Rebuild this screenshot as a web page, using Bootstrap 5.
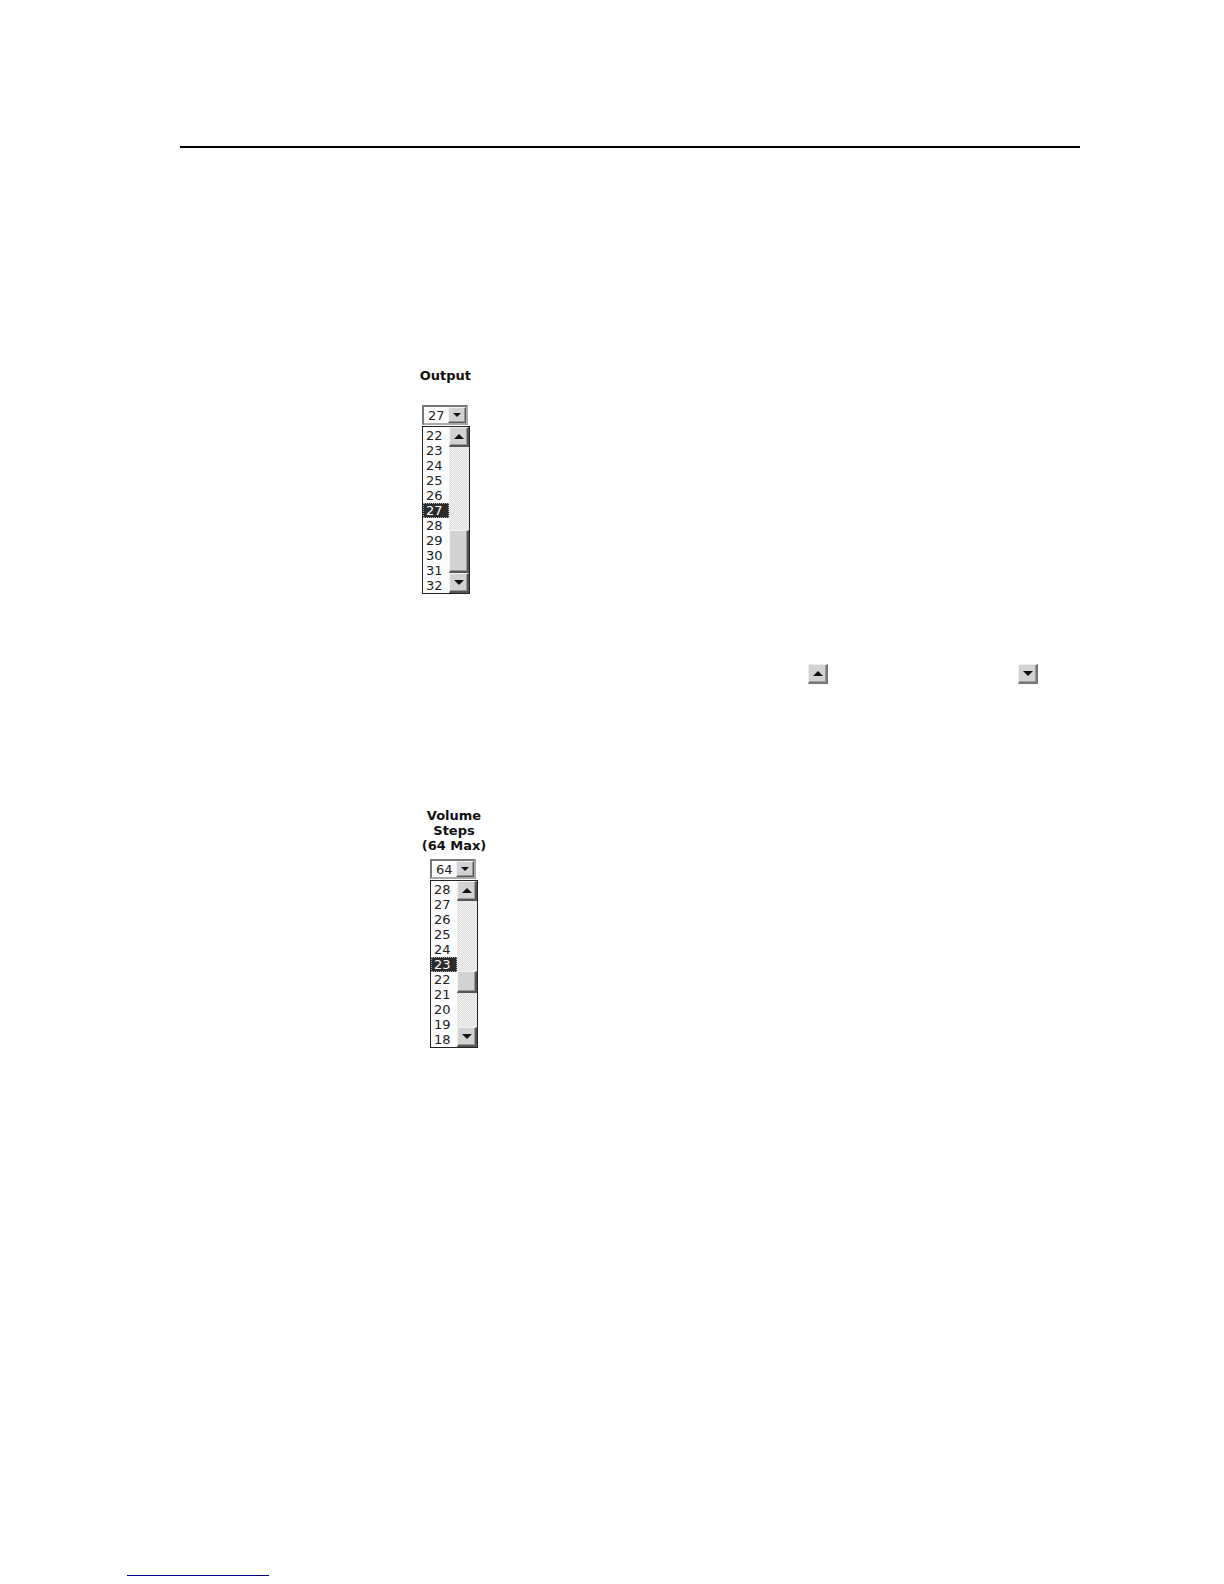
<!DOCTYPE html>
<html lang="en">
<head>
<meta charset="utf-8">
<meta name="viewport" content="width=device-width, initial-scale=1">
<title>Output and Volume Steps</title>
<link rel="stylesheet" href="https://cdn.jsdelivr.net/npm/bootstrap@5.3.0/dist/css/bootstrap.min.css">
<style>
body { font-family: "DejaVu Sans", sans-serif; font-size: 13px; line-height: 15px; color: #222; background: #fff; }
.sheet { min-height: 100vh; padding: 146px 144px 8px 127px; }
.top-rule { height: 2px; margin-left: 53px; background: #000; }
.figures { margin-left: 295px; }
.output-fig { margin-top: 220px; width: 48px; }
.volume-fig { margin-top: 124px; width: 64px; }
.fig-label { font-weight: 700; color: #111; line-height: 15px; white-space: nowrap; }
.output-fig .fig-label { margin-bottom: 22px; width: 49px; }
.volume-fig .fig-label { margin-bottom: 6px; }
.picker { width: 48px; }
.combo { width: 46px; height: 20px; border: 2px solid #777; border-right-color: #aaa; border-bottom-color: #aaa; background: #fff; margin-bottom: 1px; }
.combo select { appearance: none; border: 0; padding: 0 0 0 4px; margin: 0; width: 24px; font: inherit; color: #222; background: #fcfcfc; border-radius: 0; }
.bevel { padding: 0; background: #d2d2d2; border: 1px solid; border-color: #f2f2f2 #555 #555 #f2f2f2; box-shadow: inset -1px -1px #999; display: flex; align-items: center; justify-content: center; border-radius: 0; }
.combo .bevel { width: 18px; }
.drop { border: 1px solid #222; height: 168px; background: #fcfcfc; }
.values { width: 26px; padding-top: 1px; }
.values button { font: inherit; color: #222; background: none; border: 0; padding: 0 0 0 3px; height: 15px; text-align: left; border-radius: 0; }
.values button.active { background: #2b2b2b; color: #fff; outline: 1px dotted #aaa; outline-offset: -1px; }
.track { width: 20px; background: repeating-conic-gradient(#dcdcdc 0 25%, #f3f3f3 0 50%) 0 0 / 2px 2px; }
.track .bevel { height: 20px; width: 100%; flex: none; border-right-width: 2px; border-bottom-width: 2px; }
.output-fig .thumb { height: 43px; margin-top: auto; }
.volume-fig .thumb { height: 22px; margin-top: 70px; }
.arrow-row { margin-top: 70px; margin-right: 42px; gap: 190px; }
.arrow-row .bevel { width: 20px; height: 20px; border-color: #eee #777 #777 #eee; border-right-width: 2px; border-bottom-width: 2px; }
.foot-rule { width: 142px; height: 1px; background: #000080; }
</style>
<script src="https://cdn.jsdelivr.net/npm/bootstrap@5.3.0/dist/js/bootstrap.bundle.min.js"></script>
</head>
<body>
<svg class="d-none" aria-hidden="true">
  <symbol id="up" viewBox="0 0 10 5"><path d="M5 0 10 5H0Z" fill="#111"/></symbol>
  <symbol id="down" viewBox="0 0 10 5"><path d="M0 0H10L5 5Z" fill="#111"/></symbol>
</svg>
<main class="sheet d-flex flex-column">
  <div class="top-rule"></div>

  <section class="figures output-fig">
    <label class="fig-label d-flex justify-content-end" for="output">Output</label>
    <div class="picker">
      <div class="combo d-flex">
        <select id="output"><option>27</option></select>
        <button type="button" class="bevel" aria-label="Open output list"><svg width="8" height="4"><use href="#down"/></svg></button>
      </div>
      <div class="drop d-flex">
        <div class="values d-flex flex-column" role="listbox" aria-label="Output">
          <button type="button" role="option">22</button>
          <button type="button" role="option">23</button>
          <button type="button" role="option">24</button>
          <button type="button" role="option">25</button>
          <button type="button" role="option">26</button>
          <button type="button" role="option" class="active" aria-selected="true">27</button>
          <button type="button" role="option">28</button>
          <button type="button" role="option">29</button>
          <button type="button" role="option">30</button>
          <button type="button" role="option">31</button>
          <button type="button" role="option">32</button>
        </div>
        <div class="track d-flex flex-column">
          <button type="button" class="bevel" aria-label="Scroll up"><svg width="10" height="5"><use href="#up"/></svg></button>
          <div class="bevel thumb"></div>
          <button type="button" class="bevel" aria-label="Scroll down"><svg width="10" height="5"><use href="#down"/></svg></button>
        </div>
      </div>
    </div>
  </section>

  <div class="arrow-row d-flex justify-content-end">
    <button type="button" class="bevel" aria-label="Up"><svg width="10" height="5"><use href="#up"/></svg></button>
    <button type="button" class="bevel" aria-label="Down"><svg width="10" height="5"><use href="#down"/></svg></button>
  </div>

  <section class="figures volume-fig d-flex flex-column align-items-center">
    <label class="fig-label text-center" for="volume">Volume<br>Steps<br>(64 Max)</label>
    <div class="picker">
      <div class="combo d-flex">
        <select id="volume"><option>64</option></select>
        <button type="button" class="bevel" aria-label="Open volume list"><svg width="8" height="4"><use href="#down"/></svg></button>
      </div>
      <div class="drop d-flex">
        <div class="values d-flex flex-column" role="listbox" aria-label="Volume steps">
          <button type="button" role="option">28</button>
          <button type="button" role="option">27</button>
          <button type="button" role="option">26</button>
          <button type="button" role="option">25</button>
          <button type="button" role="option">24</button>
          <button type="button" role="option" class="active" aria-selected="true">23</button>
          <button type="button" role="option">22</button>
          <button type="button" role="option">21</button>
          <button type="button" role="option">20</button>
          <button type="button" role="option">19</button>
          <button type="button" role="option">18</button>
        </div>
        <div class="track d-flex flex-column">
          <button type="button" class="bevel" aria-label="Scroll up"><svg width="10" height="5"><use href="#up"/></svg></button>
          <div class="bevel thumb"></div>
          <button type="button" class="bevel mt-auto" aria-label="Scroll down"><svg width="10" height="5"><use href="#down"/></svg></button>
        </div>
      </div>
    </div>
  </section>

  <div class="foot-rule mt-auto"></div>
</main>
</body>
</html>
